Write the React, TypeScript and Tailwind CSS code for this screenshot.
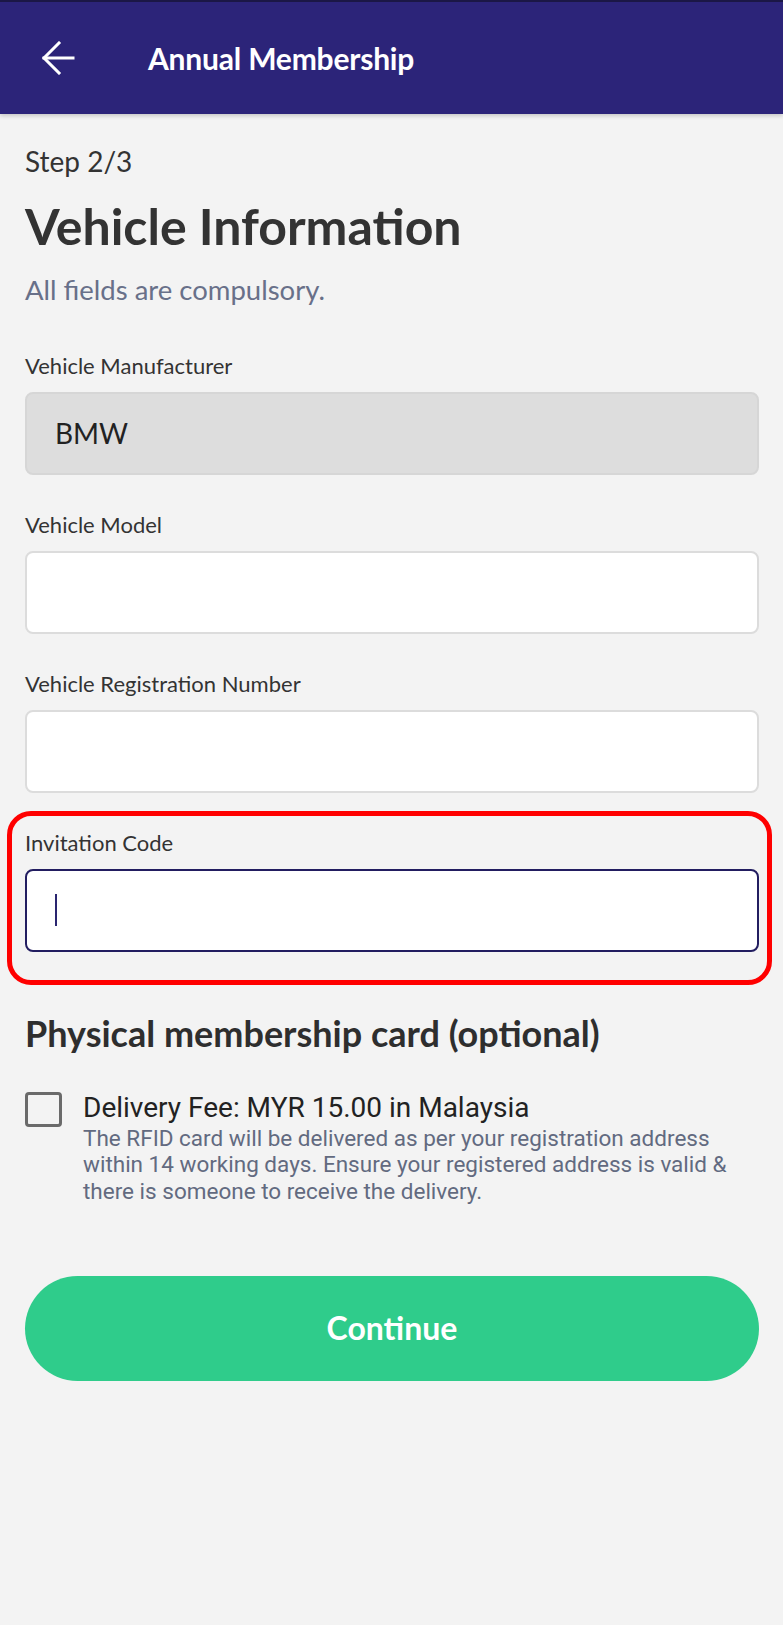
import React from "react";

const lato = { fontFamily: "Lato, 'Open Sans', sans-serif" };

function Field({
  label,
  value,
  variant,
  className = "",
}: {
  label: string;
  value?: string;
  variant: "disabled" | "empty" | "focused";
  className?: string;
}) {
  const box =
    variant === "disabled"
      ? "bg-[#dddddd] border-2 border-[#d6d6d6]"
      : variant === "focused"
      ? "bg-white border-2 border-[#221d60]"
      : "bg-white border-2 border-[#dcdcdc]";
  return (
    <div className={className}>
      <div className="text-[22px] leading-[1.2] text-[#333333] h-[26px]">{label}</div>
      <div className={`mt-[13px] h-[83px] rounded-[8px] flex items-center pl-[28px] ${box}`}>
        {value ? <span className="text-[28px] text-[#222222] leading-none">{value}</span> : null}
        {variant === "focused" ? <span className="block w-[2px] h-[32px] bg-[#2a2570]" /> : null}
      </div>
    </div>
  );
}

export default function App() {
  return (
    <div className="w-full min-h-[1625px] bg-[#f3f3f3]" style={lato}>
      <header className="h-[114px] bg-[#2c2479] border-t-2 border-[#1b1746] flex items-center shadow-[0_2px_4px_rgba(0,0,0,0.18)] relative z-10">
        <div className="ml-[41px] w-[34px] h-[34px] flex items-center">
          <svg width="34" height="34" viewBox="0 0 34 34" fill="none" stroke="white" strokeWidth="3" strokeLinecap="square">
            <path d="M3 17H32" />
            <path d="M18 2L3 17L18 32" />
          </svg>
        </div>
        <div className="ml-[73px] text-white text-[30px] font-bold tracking-[-0.2px]" style={{ fontFamily: "Lato, sans-serif" }}>
          Annual Membership
        </div>
      </header>

      <main className="pl-[25px] pr-[24px] pt-[31px] pb-[40px]">
        <div className="text-[28px] leading-[1.2] text-[#333333]">Step 2/3</div>
        <h1 className="mt-[17px] text-[50px] leading-[1.2] font-bold text-[#333333]">Vehicle Information</h1>
        <p className="mt-[17px] text-[27.5px] leading-[1.2] text-[#687089]">All fields are compulsory.</p>

        <Field className="mt-[47px]" label="Vehicle Manufacturer" value="BMW" variant="disabled" />
        <Field className="mt-[37px]" label="Vehicle Model" variant="empty" />
        <Field className="mt-[37px]" label="Vehicle Registration Number" variant="empty" />
        <div className="relative mt-[37px]">
          <Field label="Invitation Code" variant="focused" />
          <div className="absolute left-[-18px] right-[-13px] top-[-19px] bottom-[-33px] border-[5px] border-[#ff0000] rounded-[24px] pointer-events-none" />
        </div>

        <h2 className="mt-[60px] text-[36px] leading-[1.2] font-bold text-[#2e2e2e]">Physical membership card (optional)</h2>

        <div className="mt-[37px] flex items-start" style={{ fontFamily: "Roboto, sans-serif" }}>
          <div className="w-[37px] h-[35px] border-[3.5px] border-[#6a6a6a] rounded-[4px] shrink-0" />
          <div className="ml-[21px]">
            <div className="text-[28px] leading-[32px] text-[#222222]">Delivery Fee: MYR 15.00 in Malaysia</div>
            <div className="mt-[1px] text-[22.5px] leading-[26.7px] text-[#626a80]">
              The RFID card will be delivered as per your registration address within 14 working days. Ensure your registered address is valid &amp; there is someone to receive the delivery.
            </div>
          </div>
        </div>

        <button className="mt-[71px] w-full h-[105px] rounded-full bg-[#2fcc8b] flex items-center justify-center text-white text-[32px] font-bold" style={lato}>
          Continue
        </button>
      </main>
    </div>
  );
}
